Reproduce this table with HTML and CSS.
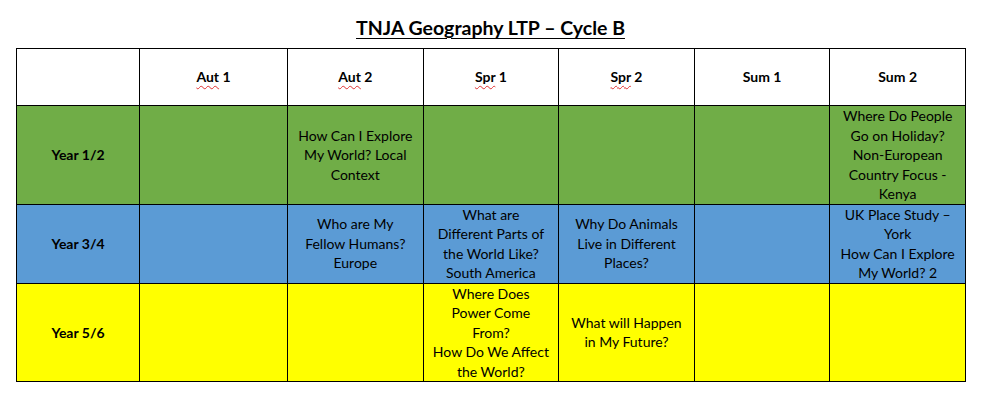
FILE: index.html
```html
<!DOCTYPE html>
<html lang="en">
<head>
    <meta charset="UTF-8">
    <meta name="viewport" content="width=device-width, initial-scale=1.0">
    <title>TNJA Geography LTP</title>
    <link rel="stylesheet" href="styles.css">
</head>
<body>
    <div class="page">
        <h1 class="title">TNJA Geography LTP – Cycle B</h1>

        <table class="ltp">
            <colgroup>
                <col class="c-year">
                <col class="c-wide">
                <col class="c-term">
                <col class="c-term">
                <col class="c-term">
                <col class="c-term">
                <col class="c-term">
            </colgroup>
            <tr class="head">
                <th></th>
                <th><span class="spell">Aut</span> 1</th>
                <th><span class="spell">Aut</span> 2</th>
                <th><span class="spell">Spr</span> 1</th>
                <th><span class="spell">Spr</span> 2</th>
                <th>Sum 1</th>
                <th>Sum 2</th>
            </tr>
            <tr class="y12">
                <th>Year 1/2</th>
                <td></td>
                <td>How Can I Explore<br>My World? Local<br>Context</td>
                <td></td>
                <td></td>
                <td></td>
                <td>Where Do People<br>Go on Holiday?<br>Non-European<br>Country Focus -<br>Kenya</td>
            </tr>
            <tr class="y34">
                <th>Year 3/4</th>
                <td></td>
                <td>Who are My<br>Fellow Humans?<br>Europe</td>
                <td>What are<br>Different Parts of<br>the World Like?<br>South America</td>
                <td>Why Do Animals<br>Live in Different<br>Places?</td>
                <td></td>
                <td>UK Place Study –<br>York<br>How Can I Explore<br>My World? 2</td>
            </tr>
            <tr class="y56">
                <th>Year 5/6</th>
                <td></td>
                <td></td>
                <td>Where Does<br>Power Come<br>From?<br>How Do We Affect<br>the World?</td>
                <td>What will Happen<br>in My Future?</td>
                <td></td>
                <td></td>
            </tr>
        </table>
    </div>
</body>
</html>
```

FILE: styles.css
```css
* {
    margin: 0;
    padding: 0;
    box-sizing: border-box;
}

body {
    background: #fff;
    color: #000;
    font-family: Lato, 'Open Sans', sans-serif;
}

.page {
    width: 949px;
    margin-left: 16px;
    padding-top: 17px;
}

.title {
    text-align: center;
    font-size: 19.5px;
    font-weight: 700;
    line-height: 22px;
    text-decoration: underline;
    text-decoration-thickness: 1px;
    text-underline-offset: 3px;
    margin-bottom: 9px;
}

.ltp {
    width: 949px;
    border-collapse: collapse;
    table-layout: fixed;
}

.c-year { width: 123px; }
.c-wide { width: 148px; }
.c-term { width: 135.6px; }

.ltp th,
.ltp td {
    border: 1px solid #000;
    text-align: center;
    vertical-align: middle;
    font-size: 14px;
    line-height: 19.5px;
    padding: 0 2px;
    white-space: nowrap;
}

.ltp th {
    font-weight: 700;
}

.ltp td {
    font-weight: 400;
}

.head { height: 57px; background: #fff; }
.y12 { height: 97px; background: #70ad47; }
.y34 { height: 79px; background: #5b9bd5; }
.y56 { height: 97px; background: #ffff00; }

.spell {
    text-decoration: underline wavy #e03030;
    text-decoration-thickness: 1px;
    text-underline-offset: 3px;
}
```
